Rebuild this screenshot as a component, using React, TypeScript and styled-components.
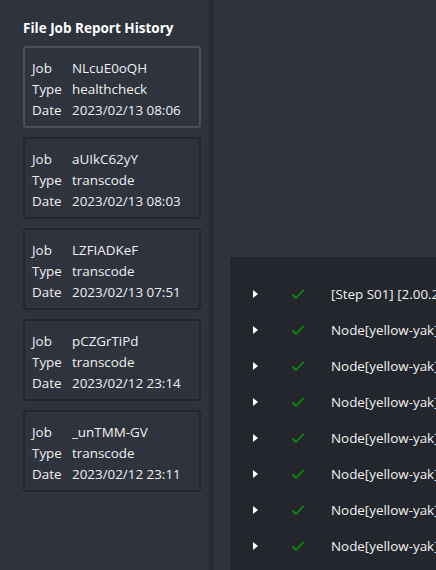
import React from "react";
import styled, { createGlobalStyle } from "styled-components";

const Global = createGlobalStyle`
  html, body { margin: 0; padding: 0; background: #2e333d; }
  body { font-family: "Open Sans", "Noto Sans", sans-serif; color: #f2f2f2; }
  * { box-sizing: border-box; }
`;

const Page = styled.div`
  display: flex;
  height: 570px;
  width: 436px;
  overflow: hidden;
  background: #2e333d;
`;

const Sidebar = styled.aside`
  width: 209px;
  flex: none;
  padding: 19px 0 0 23px;
  display: flex;
  flex-direction: column;
  gap: 9px;
`;

const Title = styled.h2`
  margin: 0;
  font-size: 13.5px;
  font-weight: 700;
  line-height: 18px;
  color: #ffffff;
  white-space: nowrap;
`;

const Card = styled.div<{ $active?: boolean }>`
  width: 178px;
  height: 82px;
  border: 2px solid ${(p) => (p.$active ? "#4a4f5a" : "#22262c")};
  border-radius: 3px;
  padding: 9px 7px 6px;
  display: grid;
  grid-template-columns: 40px 1fr;
  grid-auto-rows: 21px;
  font-size: 13.4px;
  align-items: center;
`;

const Label = styled.span`
  color: #f0f0f0;
`;

const Value = styled.span`
  color: #f0f0f0;
  white-space: nowrap;
`;

const Divider = styled.div`
  width: 5px;
  flex: none;
  background: #262a31;
`;

const Main = styled.main`
  flex: 1;
  min-width: 0;
  padding: 257px 0 0 16px;
  display: flex;
`;

const Panel = styled.section`
  flex: 1;
  min-width: 0;
  background: #23262c;
  border-top-left-radius: 3px;
  padding-top: 19px;
  display: flex;
  flex-direction: column;
`;

const Row = styled.div`
  height: 36px;
  flex: none;
  display: flex;
  align-items: center;
  white-space: nowrap;
  overflow: hidden;
`;

const Arrow = styled.span`
  width: 0;
  height: 0;
  margin-left: 23px;
  border-top: 4.5px solid transparent;
  border-bottom: 4.5px solid transparent;
  border-left: 5px solid #ffffff;
  flex: none;
`;

const Check = styled.svg`
  margin-left: 33px;
  width: 14px;
  height: 12px;
  flex: none;
`;

const RowText = styled.span`
  margin-left: 26px;
  font-size: 13.4px;
  color: #f2f2f2;
`;

const jobs = [
  { job: "NLcuE0oQH", type: "healthcheck", date: "2023/02/13 08:06" },
  { job: "aUIkC62yY", type: "transcode", date: "2023/02/13 08:03" },
  { job: "LZFIADKeF", type: "transcode", date: "2023/02/13 07:51" },
  { job: "pCZGrTiPd", type: "transcode", date: "2023/02/12 23:14" },
  { job: "_unTMM-GV", type: "transcode", date: "2023/02/12 23:11" },
];

const steps = [
  "[Step S01] [2.00.21] Checking file",
  ...Array.from({ length: 8 }, () => "Node[yellow-yak]:Worker[fast-fox] started"),
];

export default function App() {
  return (
    <>
      <Global />
      <Page>
        <Sidebar>
          <Title>File Job Report History</Title>
          {jobs.map((j, i) => (
            <Card key={j.job} $active={i === 0}>
              <Label>Job</Label>
              <Value>{j.job}</Value>
              <Label>Type</Label>
              <Value>{j.type}</Value>
              <Label>Date</Label>
              <Value>{j.date}</Value>
            </Card>
          ))}
        </Sidebar>
        <Divider />
        <Main>
          <Panel>
            {steps.map((s, i) => (
              <Row key={i}>
                <Arrow />
                <Check viewBox="0 0 14 12">
                  <path d="M1.5 6.5 L5 10 L12.5 2" fill="none" stroke="#0f8a0f" strokeWidth="1.8" />
                </Check>
                <RowText>{s}</RowText>
              </Row>
            ))}
          </Panel>
        </Main>
      </Page>
    </>
  );
}
